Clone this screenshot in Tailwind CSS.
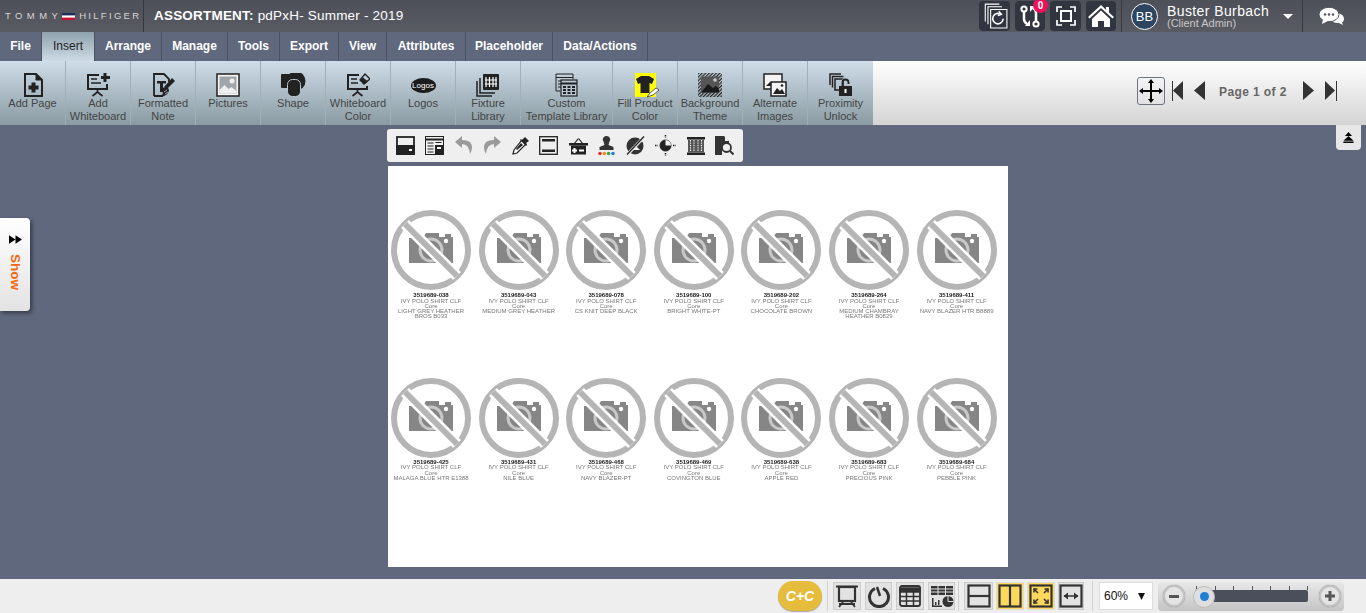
<!DOCTYPE html>
<html lang="en">
<head>
	<meta charset="UTF-8">
	<title>Assortment</title>
	<script src="https://cdn.jsdelivr.net/npm/@tailwindcss/browser@4"></script>
</head>
<body class="bg-[#5f687c] font-['Liberation_Sans',Arial,sans-serif] overflow-hidden">
	<svg class="hidden" width="0" height="0">
		<defs>
			<symbol id="nophoto" viewBox="0 0 80 80">
				<path fill="#868686" d="M18 28h14l3-5h13v4h6v-3h6v3h2v26H18z"/>
				<circle cx="55" cy="31" r="2.2" fill="#fff"/>
				<circle cx="40" cy="40" r="11" fill="none" stroke="#c8c8c8" stroke-width="3"/>
				<circle cx="40" cy="40" r="37" fill="none" stroke="#b5b5b5" stroke-width="6"/>
				<path d="M14 14 66 66" stroke="#fff" stroke-width="11"/>
				<path d="M14 14 66 66" stroke="#b5b5b5" stroke-width="6"/>
			</symbol>
		</defs>
	</svg>

	<div class="flex flex-col h-[613px] w-[1366px]">
		<!-- top header -->
		<header class="h-[32px] flex items-center bg-gradient-to-b from-[#4d5058] to-[#585b62] text-white">
			<div class="w-[144px] h-full flex items-center pl-[5px] border-r border-[#35383f] text-[9.5px] text-[#d5d5d5] whitespace-nowrap">
				<span class="tracking-[4.4px]">TOMMY</span>
				<svg class="w-[13px] h-[7px] mr-[4px]" viewBox="0 0 13 7"><rect width="13" height="7" fill="#fff"/><rect width="13" height="2.4" fill="#1d2d5c"/><rect y="4.6" width="13" height="2.4" fill="#c8102e"/></svg>
				<span class="tracking-[2.3px]">HILFIGER</span>
			</div>
			<div class="ml-[10px] text-[13.5px] tracking-[0.2px]"><span class="font-bold">ASSORTMENT:</span> pdPxH- Summer - 2019</div>

			<div class="ml-auto flex items-center h-full">
				<div class="flex gap-[5px]">
					<div class="w-[31px] h-[30px] rounded-[4px] bg-[#30353f] flex items-center justify-center">
						<svg class="w-[26px] h-[26px]" viewBox="0 0 24 24" fill="none" stroke="#fff" stroke-width="1"><path d="M3 17V1h13M5.500 19.500V3.500h13" fill="#30353f"/><path d="M8 23V6h15v17z" fill="#30353f"/><path d="M19.500 14.500a4.800 4.800 0 1 1-2-4" stroke-width="1.500"/><path d="M15.500 7.500l2.500 3-3.500 1" stroke-width="1.300"/></svg>
					</div>
					<div class="relative w-[30px] h-[30px] rounded-[4px] bg-[#30353f] flex items-center justify-center">
						<svg class="w-[22px] h-[24px]" viewBox="0 0 22 24" fill="none" stroke="#fff" stroke-width="2.500"><circle cx="5" cy="5" r="2.600" stroke-width="2"/><circle cx="17" cy="20" r="2.600" stroke-width="2"/><path d="M5 8v7q0 3 3 5M17 17V9q0-3-3-5"/><path d="M11 16v6H6zM11 8V2h5z" fill="#fff" stroke="none"/></svg>
						<span class="absolute top-[-3px] right-[-3px] w-[15px] h-[15px] rounded-full bg-[#f0105a] text-white text-[10px] font-bold leading-[15px] text-center">0</span>
					</div>
					<div class="w-[31px] h-[30px] rounded-[4px] bg-[#30353f] flex items-center justify-center">
						<svg class="w-[20px] h-[20px]" viewBox="0 0 20 20" fill="none" stroke="#fff" stroke-width="1.700"><path d="M1 6V1h5M14 1h5v5M19 14v5h-5M6 19H1v-5"/><rect x="5" y="5" width="10" height="10" stroke-width="2"/></svg>
					</div>
					<div class="w-[30px] h-[30px] rounded-[4px] bg-[#30353f] flex items-center justify-center">
						<svg class="w-[26px] h-[24px]" viewBox="0 0 26 24" fill="#fff"><path d="M13 1 0 13l1.500 1.500L13 4l11.500 10.500L26 13l-5-4.600V3h-3v2.700z"/><path d="M4 15 13 6.500 22 15v8h-6v-6h-6v6H4z"/></svg>
					</div>
				</div>
				<div class="w-px h-[32px] bg-[#35383f] ml-[5px]"></div>
				<div class="w-[27px] h-[27px] ml-[9px] rounded-full bg-[#2c4560] border border-white text-[13px] leading-[25px] text-center">BB</div>
				<div class="ml-[9px] w-[116px]">
					<div class="text-[14px] leading-[14px] tracking-[0.4px] whitespace-nowrap">Buster Burbach</div>
					<div class="text-[11px] leading-[11px] text-[#c8c8c8] whitespace-nowrap">(Client Admin)</div>
				</div>
				<svg class="w-[10px] h-[5px] mr-[9px]" viewBox="0 0 10 5"><path d="M0 0h10L5 5z" fill="#fff"/></svg>
				<div class="w-px h-[32px] bg-[#35383f]"></div>
				<svg class="w-[25px] h-[18px] ml-[16px] mr-[22px]" viewBox="0 0 25 18" fill="#fff"><path d="M18 6q7 1 7 6 0 2-2 3.500l1 2.500-4-2q-5 .5-7-2z"/><ellipse cx="10" cy="7.500" rx="10" ry="7.200" stroke="#50535b" stroke-width="1"/><path d="M4 12 3 17l6-3z"/><g fill="#50535b"><circle cx="6" cy="7.500" r="1.200"/><circle cx="10" cy="7.500" r="1.200"/><circle cx="14" cy="7.500" r="1.200"/></g></svg>
			</div>
		</header>

		<!-- menu tabs -->
		<nav class="h-[29px] flex bg-[#5f687d] text-[12px] font-bold text-white">
			<div class="w-[42px] leading-[28px] text-center border-r border-[#4a5163]">File</div>
			<div class="w-[53px] leading-[29px] text-center border-r border-[#4a5163] font-normal text-[#222] bg-gradient-to-b from-[#8ea2ad] to-[#cddbe6]">Insert</div>
			<div class="w-[67px] leading-[28px] text-center border-r border-[#4a5163]">Arrange</div>
			<div class="w-[66px] leading-[28px] text-center border-r border-[#4a5163]">Manage</div>
			<div class="w-[52px] leading-[28px] text-center border-r border-[#4a5163]">Tools</div>
			<div class="w-[59px] leading-[28px] text-center border-r border-[#4a5163]">Export</div>
			<div class="w-[48px] leading-[28px] text-center border-r border-[#4a5163]">View</div>
			<div class="w-[79px] leading-[28px] text-center border-r border-[#4a5163]">Attributes</div>
			<div class="w-[87px] leading-[28px] text-center border-r border-[#4a5163]">Placeholder</div>
			<div class="w-[95px] leading-[28px] text-center border-r border-[#4a5163]">Data/Actions</div>
		</nav>

		<!-- ribbon -->
		<div class="h-[64px] flex bg-gradient-to-b from-white to-[#d4d4d4] text-[11px] leading-[13px] text-[#444]">
			<div class="flex bg-gradient-to-b from-[#cfdde8] to-[#8a9ba3]">
				<div class="w-[66px] border-r border-[#9fb0b9] flex flex-col items-center pt-[12px]">
					<svg class="w-[22px] h-[24px]" viewBox="0 0 22 24" fill="none"><path d="M3 1h11l6 6v16H3z" stroke="#222" stroke-width="2"/><path d="M14 1v6h6" fill="#222" stroke="#222"/><path d="M9.500 9.500h4v3h3v4h-3v3h-4v-3h-3v-4h3z" fill="#222"/></svg>
					<span>Add Page</span>
				</div>
				<div class="w-[65px] border-r border-[#9fb0b9] flex flex-col items-center pt-[12px] text-center">
					<svg class="w-[24px] h-[24px]" viewBox="0 0 24 24" fill="none" stroke="#222" stroke-width="2"><path d="M13 2H2v14h19v-5"/><path d="M5 6h6M5 10h10" stroke-width="1.700"/><path d="M11.500 16v3m0 0-5 4m5-4 5 4" stroke-width="1.700"/><path d="M19 0v9M15 4.500h9" stroke-width="3"/></svg>
					<span>Add<br>Whiteboard</span>
				</div>
				<div class="w-[65px] border-r border-[#9fb0b9] flex flex-col items-center pt-[12px] text-center">
					<svg class="w-[26px] h-[24px]" viewBox="0 0 26 24" fill="none"><path d="M4 23V1h10l5 5v3M4 23h9" stroke="#222" stroke-width="1.800"/><path d="M7 8h9v2.500h-3V19h-3v-8.500H7z" fill="#222"/><path d="m14 14 8-9 3 3-8 8z" fill="#222"/><path d="M12 15q6-2 7 2 0 5-8 7 3-3 1-9z" fill="#222"/><path d="m14 19 3-2M15 21l3-2" stroke="#b8c7d1" stroke-width=".8"/></svg>
					<span>Formatted<br>Note</span>
				</div>
				<div class="w-[65px] border-r border-[#9fb0b9] flex flex-col items-center pt-[12px]">
					<svg class="w-[24px] h-[24px]" viewBox="0 0 24 24"><rect x="1" y="1" width="22" height="22" fill="#f4f4f4" stroke="#222" stroke-width="1.500"/><rect x="3.500" y="3.500" width="17" height="17" fill="#9fa6ab"/><circle cx="16" cy="8" r="2.500" fill="#eee"/><path d="M3.500 17l5-5 4 4 3-2 5 4v2.500h-17z" fill="#eee"/></svg>
					<span>Pictures</span>
				</div>
				<div class="w-[65px] border-r border-[#9fb0b9] flex flex-col items-center pt-[12px]">
					<svg class="w-[25px] h-[24px]" viewBox="0 0 25 24"><rect x="0" y="1" width="17" height="14" rx="1" fill="#222"/><circle cx="15" cy="8" r="9.500" fill="#222"/><rect x="6.500" y="6.500" width="13" height="17" rx="5" fill="#222" stroke="#b9c8d2" stroke-width="1"/></svg>
					<span>Shape</span>
				</div>
				<div class="w-[65px] border-r border-[#9fb0b9] flex flex-col items-center pt-[12px] text-center">
					<svg class="w-[24px] h-[24px]" viewBox="0 0 24 24" fill="none" stroke="#222" stroke-width="2"><path d="M13 2H2v14h19v-3"/><path d="M5 6h6M5 10h7" stroke-width="1.700"/><path d="M11.500 16v3m0 0-5 4m5-4 5 4" stroke-width="1.700"/><path d="m14 7 5-6 5 5-6 5z" stroke-width="1.300"/><path d="m14 7 4.500 4L22 8.500 17 4.500z" fill="#222" stroke="none"/></svg>
					<span>Whiteboard<br>Color</span>
				</div>
				<div class="w-[65px] border-r border-[#9fb0b9] flex flex-col items-center pt-[12px]">
					<div class="h-[24px] flex items-center"><div class="w-[25px] h-[15px] rounded-[50%] bg-[#1c1c1c] text-white text-[8px] leading-[15px] text-center">Logos</div></div>
					<span>Logos</span>
				</div>
				<div class="w-[65px] border-r border-[#9fb0b9] flex flex-col items-center pt-[12px] text-center">
					<svg class="w-[24px] h-[24px]" viewBox="0 0 24 24" fill="none"><path d="M1 8v15h15" stroke="#222" stroke-width="1.500"/><path d="M4 5v15h15" stroke="#222" stroke-width="1.500"/><rect x="7" y="1" width="16" height="16" rx="1" fill="#222"/><path d="M10 4v10M13.500 4v10M17 4v10M20 4v10M9 7h12M9 11h12" stroke="#fff" stroke-width="1.200"/></svg>
					<span>Fixture<br>Library</span>
				</div>
				<div class="w-[92px] border-r border-[#9fb0b9] flex flex-col items-center pt-[12px] text-center">
					<svg class="w-[23px] h-[24px]" viewBox="0 0 23 24" fill="none" stroke="#222"><path d="M5 18H1V1h17v5M1 4.500h17M3 8h3M3 11h3M3 14h3"/><rect x="6" y="7" width="16" height="16" fill="#b8c7d1" stroke-width="1.200"/><path d="M6 10.500h16" stroke-width="2"/><path d="M8 14h3M12.500 14h3M17 14h3M8 17h3M12.500 17h3M17 17h3M8 20h3M12.500 20h3M17 20h3" stroke-width="1.800"/></svg>
					<span>Custom<br><span class="whitespace-nowrap">Template Library</span></span>
				</div>
				<div class="w-[65px] border-r border-[#9fb0b9] flex flex-col items-center pt-[12px] text-center">
					<div class="relative w-[24px] h-[24px]">
						<div class="absolute left-[2px] top-0 w-[21px] h-[24px] bg-[#ffff00]"></div>
						<svg class="absolute left-[3px] top-[3px] w-[18px] h-[17px]" viewBox="0 0 18 17"><path d="M5 0h8l5 3-2 5-2.500-1v10h-9V7L2 8 0 3z" fill="#222"/></svg>
						<svg class="absolute left-[14px] top-[14px] w-[13px] h-[11px]" viewBox="0 0 13 11"><path d="M0 10 3 6l6-5 3 2-6 5z" fill="#fff" stroke="#333" stroke-width=".8"/></svg>
					</div>
					<span class="whitespace-nowrap">Fill Product<br>Color</span>
				</div>
				<div class="w-[65px] border-r border-[#9fb0b9] flex flex-col items-center pt-[12px] text-center">
					<svg class="w-[24px] h-[24px]" viewBox="0 0 24 24"><defs><pattern id="hatch" width="2.500" height="2.500" patternUnits="userSpaceOnUse" patternTransform="rotate(45)"><rect width="1.200" height="2.500" fill="#222"/></pattern></defs><rect width="24" height="24" fill="url(#hatch)"/><rect x="3" y="3.500" width="18" height="16" fill="#555"/><path d="M3 19.500 10 11l5 4 3-2 3 3v3.500z" fill="#1a1a1a"/><circle cx="17" cy="7" r="1.800" fill="#ccc"/></svg>
					<span class="whitespace-nowrap">Background<br>Theme</span>
				</div>
				<div class="w-[65px] border-r border-[#9fb0b9] flex flex-col items-center pt-[12px] text-center">
					<svg class="w-[24px] h-[24px]" viewBox="0 0 24 24"><rect x="1" y="1" width="18" height="15" fill="#f4f4f4" stroke="#222" stroke-width="1.500"/><path d="M3 13l4-4 3 3 3-2 4 3z" fill="#222"/><rect x="8" y="9" width="15" height="14" fill="#f4f4f4" stroke="#222" stroke-width="1.500"/><path d="M10 21l4-6 3 3 2-2 3 5z" fill="#222"/><circle cx="19" cy="12.500" r="1.300" fill="#222"/></svg>
					<span>Alternate<br>Images</span>
				</div>
				<div class="w-[65px] flex flex-col items-center pt-[12px] text-center">
					<svg class="w-[24px] h-[24px]" viewBox="0 0 24 24" fill="none" stroke="#222"><path d="M1 12V1h11M3.500 14.500V3.500h11" stroke-width="1.500"/><rect x="6" y="6" width="8" height="11" stroke-width="1.500"/><path d="M13 13V9.500a3.500 3.500 0 0 1 7 0V11" stroke-width="2" stroke="#b8c7d1"/><path d="M13.500 13V9.500a3 3 0 0 1 6 0V11" stroke-width="1.800"/><rect x="10" y="13" width="13" height="10" fill="#222" stroke="none"/><rect x="15.500" y="16" width="2" height="4" fill="#fff" stroke="none"/></svg>
					<span>Proximity<br>Unlock</span>
				</div>
			</div>

			<div class="ml-auto flex items-center h-full pb-[4px] pr-[29px]">
				<div class="w-[28px] h-[28px] border border-[#6e7580] rounded-[3px] flex items-center justify-center">
					<svg class="w-[24px] h-[24px]" viewBox="0 0 24 24" fill="#000"><path d="M12 0l3 4h-2v7h7V9l4 3-4 3v-2h-7v7h2l-3 4-3-4h2v-7H4v2l-4-3 4-3v2h7V4H9z"/></svg>
				</div>
				<svg class="w-[12px] h-[20px] ml-[7px]" viewBox="0 0 12 20" fill="#333"><rect width="1" height="20"/><path d="M11 0v19L1 9.500z"/></svg>
				<svg class="w-[11px] h-[20px] ml-[10px]" viewBox="0 0 11 20" fill="#333"><path d="M11 0v19L0 9.500z"/></svg>
				<span class="ml-[14px] w-[71px] pt-[2px] text-[12px] font-bold text-[#666] tracking-[0.4px] whitespace-nowrap">Page 1 of 2</span>
				<svg class="w-[11px] h-[20px] ml-[13px]" viewBox="0 0 11 20" fill="#333"><path d="M0 0v19l11-9.500z"/></svg>
				<svg class="w-[12px] h-[20px] ml-[11px]" viewBox="0 0 12 20" fill="#333"><rect x="11" width="1" height="20"/><path d="M0 0v19l10-9.500z"/></svg>
			</div>
		</div>

		<!-- canvas -->
		<main class="relative flex-1 overflow-hidden">
			<div class="absolute left-[387px] top-[4px] w-[356px] h-[33px] bg-[#efefef] rounded-[3px] flex items-center justify-between px-[9px]">
				<svg class="w-[19px] h-[19px]" viewBox="0 0 19 19" fill="none" stroke="#222" stroke-width="1.800"><rect x="1" y="1" width="17" height="17"/><path d="M1 10h17v8H1z" fill="#222"/><rect x="13" y="13" width="3" height="2" fill="#fff" stroke="none"/></svg>
				<svg class="w-[19px] h-[19px]" viewBox="0 0 19 19" fill="none" stroke="#222"><rect x=".5" y=".5" width="18" height="18"/><path d="M.5 3.500h18" stroke-width="2"/><path d="M2.500 7h6M2.500 10h6M2.500 13h6M2.500 16h6M10.500 6.500h6"/><rect x="10" y="9" width="8" height="9" fill="#222" stroke="none"/><rect x="12" y="11" width="4" height="2" fill="#fff" stroke="none"/></svg>
				<svg class="w-[18px] h-[19px]" viewBox="0 0 18 19" fill="#9a9a9a"><path d="M7 0 0 6l7 6V8q7 0 8 10 4-7 0-12-3-2-8-2z"/></svg>
				<svg class="w-[18px] h-[19px]" viewBox="0 0 18 19" fill="#9a9a9a"><path d="m11 0 7 6-7 6V8q-7 0-8 10-4-7 0-12 3-2 8-2z"/></svg>
				<svg class="w-[17px] h-[18px]" viewBox="0 0 17 18"><path d="m10 3 4 4-9 9-4 1 1-4z" fill="#fff" stroke="#222" stroke-width="1.200"/><path d="m9 4 4-4 4 4-3 2 1 2-1 1-6-6 1-1z" fill="#222"/><path d="m9 6-5 6 1 1 6-5z" fill="#222"/></svg>
				<svg class="w-[19px] h-[19px]" viewBox="0 0 19 19" fill="none" stroke="#222" stroke-width="1.300"><rect x=".7" y=".7" width="17.600" height="17.600"/><rect x="3" y="3" width="13" height="2.500" fill="#222" stroke="none"/><rect x="3" y="13.500" width="13" height="2.500" fill="#222" stroke="none"/></svg>
				<svg class="w-[19px] h-[18px]" viewBox="0 0 19 18"><path d="m5 7 4-5h1l4 5" fill="none" stroke="#222" stroke-width="1.200"/><rect y="6" width="19" height="2.500" fill="#222"/><rect x="2" y="8.500" width="15" height="9" fill="#222"/><path d="M4.500 11h2v1.500h1.500v2H6.500V16h-2v-1.500H3v-2h1.500zM10 12.500h5v2h-5z" fill="#fff"/></svg>
				<svg class="w-[17px] h-[20px]" viewBox="0 0 17 20"><path d="M8.500 0a3.500 3.500 0 0 1 3 5.500l-1 3.500 5 2v3H1.500v-3l5-2-1-3.500a3.500 3.500 0 0 1 3-5.500z" fill="#333"/><circle cx="2" cy="17.500" r="1.800" fill="#d9362e"/><circle cx="6.400" cy="17.500" r="1.800" fill="#ed8b1f"/><circle cx="10.600" cy="17.500" r="1.800" fill="#3fa24a"/><circle cx="15" cy="17.500" r="1.800" fill="#2a7dd1"/></svg>
				<svg class="w-[19px] h-[19px]" viewBox="0 0 19 19"><circle cx="9" cy="10" r="8.500" fill="#333"/><path d="M5 14l4-5 5 5z" fill="#efefef"/><path d="M1 19 18 1" stroke="#efefef" stroke-width="3"/><path d="M1 18.500 18 .5" stroke="#222" stroke-width="1.300"/></svg>
				<svg class="w-[21px] h-[21px]" viewBox="0 0 21 21" fill="none" stroke="#222"><path d="M0 10.500h3M18 10.500h3M10.500 0v3M10.500 18v3" stroke-width="1.500" stroke-dasharray="1.500 1"/><circle cx="10.500" cy="10.500" r="5.500" fill="#222"/><path d="M10.500 5a5.500 5.500 0 0 1 5.500 5.500h-5.500z" fill="#efefef" stroke="none"/></svg>
				<svg class="w-[18px] h-[18px]" viewBox="0 0 18 18"><rect width="18" height="2.500" fill="#222"/><rect y="15.500" width="18" height="2.500" fill="#222"/><rect x="1" y="2.500" width="16" height="13" fill="#555"/><path d="M3.500 3v12M7 3v12M11 3v12M14.500 3v12" stroke="#efefef" stroke-width="1.100" stroke-dasharray="1.400 1"/></svg>
				<svg class="w-[19px] h-[19px]" viewBox="0 0 19 19"><path d="M0 0h9l5 5v4H0zM0 9h7v10H0z" fill="#333"/><path d="M10 0v5h4z" fill="#efefef"/><circle cx="11.500" cy="11.500" r="4.500" fill="#efefef" stroke="#333" stroke-width="1.800"/><path d="m15 15 3.500 3.500" stroke="#333" stroke-width="2"/></svg>
			</div>

			<div class="absolute left-[1336px] top-0 w-[25px] h-[25px] bg-[#e7e7e7] rounded-b-[4px] flex items-center justify-center">
				<svg class="w-[11px] h-[11px]" viewBox="0 0 13 14" fill="#000"><path d="M6.500 0 11 5H2zM6.500 5 13 11H0zM0 12h13v2H0z"/></svg>
			</div>

			<div class="absolute left-0 top-[93px] w-[30px] h-[93px] rounded-r-[4px] bg-gradient-to-b from-white to-[#e3e3e3] shadow-[2px_2px_4px_rgba(0,0,0,0.45)] flex flex-col items-center pt-[17px]">
				<svg class="w-[13px] h-[9px]" viewBox="0 0 12 8" fill="#000"><path d="M0 0l6 4-6 4zM6 0l6 4-6 4z"/></svg>
				<span class="mt-[10px] text-[13.5px] leading-[14px] font-bold text-[#f26a12] [writing-mode:vertical-rl]">Show</span>
			</div>

			<!-- page -->
			<div class="ml-[388px] mt-[41px] w-[620px] h-[401px] bg-white pt-[44px] pl-[3px]">
				<div class="grid grid-cols-[repeat(7,87.6px)] auto-rows-[168px] text-center text-[6px] leading-[5px] text-[#777]">
					<div class="w-[80px]"><svg class="w-[80px] h-[80px]"><use href="#nophoto"/></svg><div class="mt-[3px] font-bold text-[#222] blur-[0.25px]">3519689-038</div><div class="blur-[0.25px] pt-[1px]">IVY POLO SHIRT CLF</div><div class="blur-[0.25px]">Core</div><div class="blur-[0.25px]">LIGHT GREY HEATHER<br>BROS B033</div></div>
					<div class="w-[80px]"><svg class="w-[80px] h-[80px]"><use href="#nophoto"/></svg><div class="mt-[3px] font-bold text-[#222] blur-[0.25px]">3519689-043</div><div class="blur-[0.25px] pt-[1px]">IVY POLO SHIRT CLF</div><div class="blur-[0.25px]">Core</div><div class="blur-[0.25px]">MEDIUM GREY HEATHER</div></div>
					<div class="w-[80px]"><svg class="w-[80px] h-[80px]"><use href="#nophoto"/></svg><div class="mt-[3px] font-bold text-[#222] blur-[0.25px]">3519689-078</div><div class="blur-[0.25px] pt-[1px]">IVY POLO SHIRT CLF</div><div class="blur-[0.25px]">Core</div><div class="blur-[0.25px]">CS KNIT DEEP BLACK</div></div>
					<div class="w-[80px]"><svg class="w-[80px] h-[80px]"><use href="#nophoto"/></svg><div class="mt-[3px] font-bold text-[#222] blur-[0.25px]">3519689-100</div><div class="blur-[0.25px] pt-[1px]">IVY POLO SHIRT CLF</div><div class="blur-[0.25px]">Core</div><div class="blur-[0.25px]">BRIGHT WHITE-PT</div></div>
					<div class="w-[80px]"><svg class="w-[80px] h-[80px]"><use href="#nophoto"/></svg><div class="mt-[3px] font-bold text-[#222] blur-[0.25px]">3519689-202</div><div class="blur-[0.25px] pt-[1px]">IVY POLO SHIRT CLF</div><div class="blur-[0.25px]">Core</div><div class="blur-[0.25px]">CHOCOLATE BROWN</div></div>
					<div class="w-[80px]"><svg class="w-[80px] h-[80px]"><use href="#nophoto"/></svg><div class="mt-[3px] font-bold text-[#222] blur-[0.25px]">3519689-264</div><div class="blur-[0.25px] pt-[1px]">IVY POLO SHIRT CLF</div><div class="blur-[0.25px]">Core</div><div class="blur-[0.25px]">MEDIUM CHAMBRAY<br>HEATHER B0829</div></div>
					<div class="w-[80px]"><svg class="w-[80px] h-[80px]"><use href="#nophoto"/></svg><div class="mt-[3px] font-bold text-[#222] blur-[0.25px]">3519689-411</div><div class="blur-[0.25px] pt-[1px]">IVY POLO SHIRT CLF</div><div class="blur-[0.25px]">Core</div><div class="blur-[0.25px] whitespace-nowrap">NAVY BLAZER HTR B8889</div></div>

					<div class="w-[80px]"><svg class="w-[80px] h-[80px]"><use href="#nophoto"/></svg><div class="mt-[2px] font-bold text-[#222] blur-[0.25px]">3519689-425</div><div class="blur-[0.25px]">IVY POLO SHIRT CLF</div><div class="blur-[0.25px] mt-[1px]">Core</div><div class="blur-[0.25px] whitespace-nowrap">MALAGA BLUE HTR E1388</div></div>
					<div class="w-[80px]"><svg class="w-[80px] h-[80px]"><use href="#nophoto"/></svg><div class="mt-[2px] font-bold text-[#222] blur-[0.25px]">3519689-431</div><div class="blur-[0.25px]">IVY POLO SHIRT CLF</div><div class="blur-[0.25px] mt-[1px]">Core</div><div class="blur-[0.25px]">NILE BLUE</div></div>
					<div class="w-[80px]"><svg class="w-[80px] h-[80px]"><use href="#nophoto"/></svg><div class="mt-[2px] font-bold text-[#222] blur-[0.25px]">3519689-468</div><div class="blur-[0.25px]">IVY POLO SHIRT CLF</div><div class="blur-[0.25px] mt-[1px]">Core</div><div class="blur-[0.25px]">NAVY BLAZER-PT</div></div>
					<div class="w-[80px]"><svg class="w-[80px] h-[80px]"><use href="#nophoto"/></svg><div class="mt-[2px] font-bold text-[#222] blur-[0.25px]">3519689-469</div><div class="blur-[0.25px]">IVY POLO SHIRT CLF</div><div class="blur-[0.25px] mt-[1px]">Core</div><div class="blur-[0.25px]">COVINGTON BLUE</div></div>
					<div class="w-[80px]"><svg class="w-[80px] h-[80px]"><use href="#nophoto"/></svg><div class="mt-[2px] font-bold text-[#222] blur-[0.25px]">3519689-638</div><div class="blur-[0.25px]">IVY POLO SHIRT CLF</div><div class="blur-[0.25px] mt-[1px]">Core</div><div class="blur-[0.25px]">APPLE RED</div></div>
					<div class="w-[80px]"><svg class="w-[80px] h-[80px]"><use href="#nophoto"/></svg><div class="mt-[2px] font-bold text-[#222] blur-[0.25px]">3519689-683</div><div class="blur-[0.25px]">IVY POLO SHIRT CLF</div><div class="blur-[0.25px] mt-[1px]">Core</div><div class="blur-[0.25px]">PRECIOUS PINK</div></div>
					<div class="w-[80px]"><svg class="w-[80px] h-[80px]"><use href="#nophoto"/></svg><div class="mt-[2px] font-bold text-[#222] blur-[0.25px]">3519689-684</div><div class="blur-[0.25px]">IVY POLO SHIRT CLF</div><div class="blur-[0.25px] mt-[1px]">Core</div><div class="blur-[0.25px]">PEBBLE PINK</div></div>
				</div>
			</div>
		</main>

		<!-- bottom bar -->
		<footer class="h-[34px] bg-[#eeeeee] flex items-center">
			<div class="ml-[778px] w-[44px] h-[30px] rounded-full bg-[#e6bc3c] shadow-[0_1px_1px_rgba(0,0,0,0.3)] text-white italic font-bold text-[14px] leading-[30px] text-center">C+C</div>
			<div class="w-px h-[30px] bg-[#d0d0d0] ml-[5px]"></div>
			<div class="ml-[5px] flex gap-[4px]">
				<div class="w-[28px] h-[28px] bg-[#e2e2e2] border border-[#ccc] flex items-center justify-center">
					<svg class="w-[22px] h-[24px]" viewBox="0 0 22 24" fill="none" stroke="#333"><path d="M0 2.500h22" stroke-width="2"/><rect x="3" y="3" width="16" height="14" stroke-width="2.200"/><path d="m7 18-4 5M15 18l4 5M3 20h16" stroke-width="1.800"/></svg>
				</div>
				<div class="w-[27px] h-[28px] bg-[#e2e2e2] border border-[#ccc] flex items-center justify-center">
					<svg class="w-[24px] h-[24px]" viewBox="0 0 24 24" fill="none" stroke="#333"><path d="M8 4.500a9.500 9.500 0 1 0 8 0" stroke-width="3"/><path d="m10 3 3 9" stroke-width="2.500"/></svg>
				</div>
				<div class="w-[28px] h-[28px] bg-[#e2e2e2] border border-[#ccc] flex items-center justify-center">
					<svg class="w-[22px] h-[22px]" viewBox="0 0 22 22" fill="none" stroke="#333" stroke-width="1.500"><rect x="1" y="1" width="20" height="20" rx="2" stroke-width="1.800"/><path d="M1 3h20v4H1z" fill="#333"/><path d="M1 11.500h20M1 16h20M7.500 7v14M14.500 7v14"/></svg>
				</div>
				<div class="w-[27px] h-[28px] bg-[#e2e2e2] border border-[#ccc] flex items-center justify-center">
					<svg class="w-[24px] h-[24px]" viewBox="0 0 24 24" fill="#333"><path d="M1 2h22v9H1z"/><path d="M1 5h22M1 8h22M8 2v9M15.500 2v9" stroke="#e2e2e2" stroke-width="1"/><path d="M2 14v9h10v-1.500H3.500V14z"/><path d="M5 18h1.500v3H5zM8 16h1.500v5H8z"/><circle cx="18" cy="17.500" r="5.500"/><path d="M18 17.500V12M18 17.500h5.500" stroke="#e2e2e2"/></svg>
				</div>
			</div>
			<div class="w-px h-[30px] bg-[#d0d0d0] ml-[3px]"></div>
			<div class="ml-[5px] flex gap-[3px]">
				<div class="w-[29px] h-[28px] bg-[#e2e2e2] border border-[#ccc] flex items-center justify-center">
					<svg class="w-[24px] h-[24px]" viewBox="0 0 24 24" fill="none" stroke="#333" stroke-width="2.200"><rect x="1.500" y="1.500" width="21" height="21"/><path d="M1.500 12h21"/></svg>
				</div>
				<div class="w-[28px] h-[28px] bg-[#fdd85d] border border-[#ddd] flex items-center justify-center">
					<svg class="w-[24px] h-[24px]" viewBox="0 0 24 24" fill="none" stroke="#333" stroke-width="2.200"><rect x="1.500" y="1.500" width="21" height="21"/><path d="M12 1.500v21"/></svg>
				</div>
				<div class="w-[28px] h-[28px] bg-[#fdd85d] border border-[#ddd] flex items-center justify-center">
					<svg class="w-[24px] h-[24px]" viewBox="0 0 24 24" fill="none" stroke="#333" stroke-width="2.200"><rect x="1.500" y="1.500" width="21" height="21"/><path d="m5 5 4 4M19 5l-4 4M5 19l4-4M19 19l-4-4" stroke-width="1.600"/><path d="M5 8.500V5h3.500M19 8.500V5h-3.500M5 15.500V19h3.500M19 15.500V19h-3.500" stroke-width="1.600"/></svg>
				</div>
				<div class="w-[26px] h-[28px] bg-[#e2e2e2] border border-[#ccc] flex items-center justify-center">
					<svg class="w-[24px] h-[24px]" viewBox="0 0 24 24" fill="none" stroke="#333" stroke-width="2.200"><rect x="1.500" y="1.500" width="21" height="21"/><path d="M5 12h14" stroke-width="1.500"/><path d="M9 8.500v7L4.500 12zM15 8.500v7l4.500-3.500z" fill="#333" stroke="none"/></svg>
				</div>
			</div>
			<div class="w-px h-[30px] bg-[#d0d0d0] ml-[8px]"></div>
			<div class="ml-[6px] w-[54px] h-[28px] bg-white border border-[#ddd] flex items-center justify-between pl-[4px] pr-[7px] text-[12px] text-[#111]">
				<span>60%</span>
				<svg class="w-[7px] h-[7px]" viewBox="0 0 7 7"><path d="M0 0h7L3.500 7z" fill="#111"/></svg>
			</div>
			<div class="relative ml-[5px] w-[186px] h-[29px] rounded-[4px] bg-gradient-to-b from-[#e8e8e8] to-[#c4c4c4] flex items-center">
				<div class="ml-[5px] w-[22px] h-[22px] rounded-full bg-[#e4e4e4] border-2 border-[#c4c4c4] shadow-[0_0_1px_#777] flex items-center justify-center">
					<div class="w-[10px] h-[3px] bg-[#555]"></div>
				</div>
				<div class="ml-[10px] w-[113px] h-[12px] rounded-[2px] bg-[#4b4f5b]"></div>
				<div class="absolute left-[38px] top-[4px] w-[112px] flex justify-between"><span class="w-px h-[4px] bg-[#555]"></span><span class="w-px h-[4px] bg-[#555]"></span><span class="w-px h-[4px] bg-[#555]"></span><span class="w-px h-[4px] bg-[#555]"></span><span class="w-px h-[4px] bg-[#555]"></span><span class="w-px h-[4px] bg-[#555]"></span><span class="w-px h-[4px] bg-[#555]"></span></div>
				<div class="absolute left-[35px] top-[4px] w-[22px] h-[22px] rounded-full bg-[#dedede] border border-[#bbb] flex items-center justify-center">
					<div class="w-[9px] h-[9px] rounded-full bg-[#1e7fd6]"></div>
				</div>
				<div class="ml-auto mr-[3px] w-[22px] h-[22px] rounded-full bg-[#e4e4e4] border-2 border-[#c4c4c4] shadow-[0_0_1px_#777] flex items-center justify-center">
					<svg class="w-[10px] h-[10px]" viewBox="0 0 10 10"><path d="M3.500 0h3v3.500H10v3H6.500V10h-3V6.500H0v-3h3.500z" fill="#555"/></svg>
				</div>
			</div>
		</footer>
	</div>
</body>
</html>
